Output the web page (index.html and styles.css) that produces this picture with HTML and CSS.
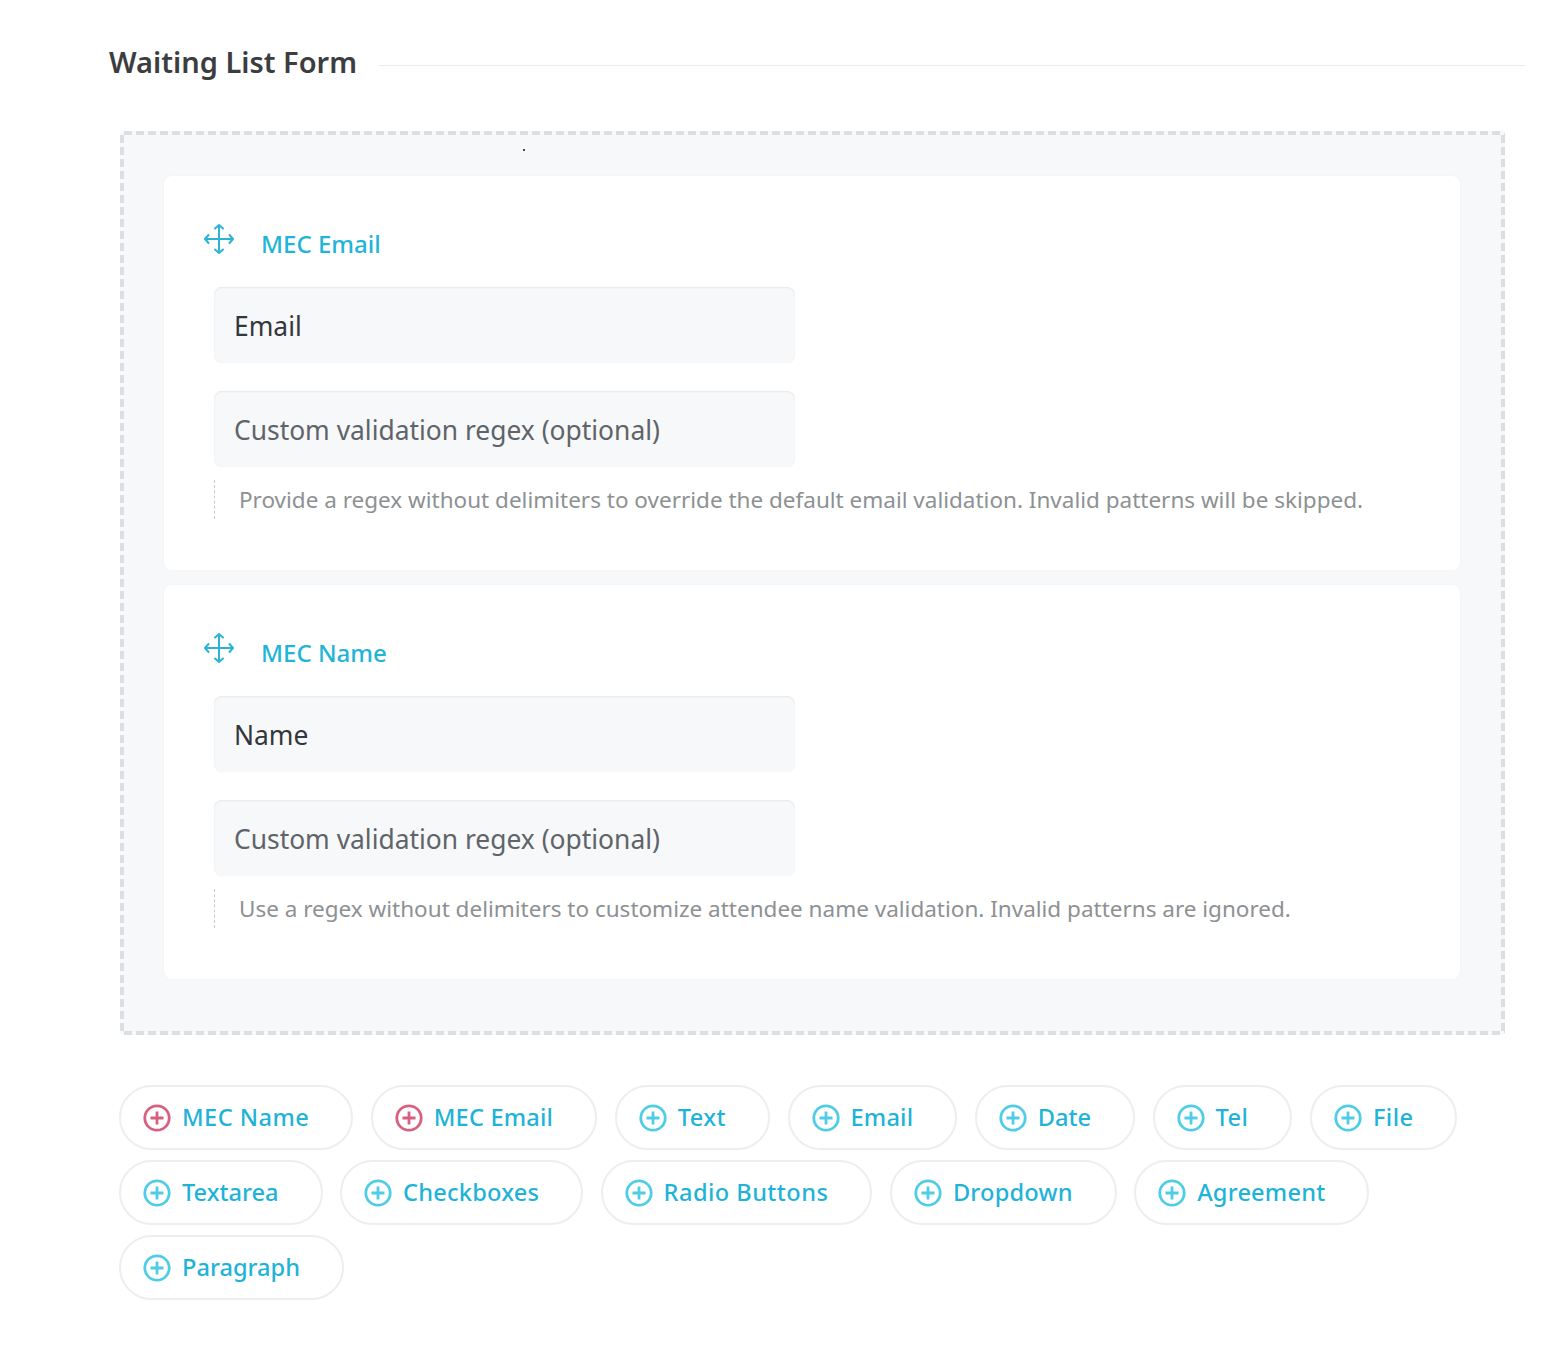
FILE: index.html
```html
<!DOCTYPE html>
<html lang="en">
<head>
<meta charset="utf-8">
<title>Waiting List Form</title>
<link rel="stylesheet" href="styles.css">
</head>
<body>
<svg class="sprite" width="0" height="0" aria-hidden="true">
  <symbol id="plus" viewBox="0 0 28 28"><circle cx="14" cy="14" r="12.2" fill="none" stroke="currentColor" stroke-width="2.8"/><path d="M14 7.500v13M7.500 14h13" fill="none" stroke="currentColor" stroke-width="2.800"/></symbol>
  <symbol id="move" viewBox="0 0 32 32"><path d="M16 2v28M2 16h28M12 5.500 16 2l4 3.500M12 26.500l4 3.500 4-3.500M5.500 12 2 16l3.500 4M26.500 12l3.500 4-3.500 4" fill="none" stroke="currentColor" stroke-width="2" stroke-linecap="round" stroke-linejoin="round"/></symbol>
</svg>
<main class="page">
  <header class="heading">
    <h2 class="heading-title">Waiting List Form</h2>
    <span class="heading-rule"></span>
  </header>
  <section class="dropzone">
    <span class="speck"></span>
    <article class="card">
      <div class="card-head">
        <svg class="move-icon"><use href="#move"/></svg>
        <span class="card-label">MEC Email</span>
      </div>
      <div class="field field-value">Email</div>
      <div class="field field-placeholder">Custom validation regex (optional)</div>
      <p class="note">Provide a regex without delimiters to override the default email validation. Invalid patterns will be skipped.</p>
    </article>
    <article class="card">
      <div class="card-head">
        <svg class="move-icon"><use href="#move"/></svg>
        <span class="card-label">MEC Name</span>
      </div>
      <div class="field field-value">Name</div>
      <div class="field field-placeholder">Custom validation regex (optional)</div>
      <p class="note">Use a regex without delimiters to customize attendee name validation. Invalid patterns are ignored.</p>
    </article>
  </section>
  <div class="pills">
    <button class="pill pill-used"><svg class="pill-icon"><use href="#plus"/></svg>MEC Name</button>
    <button class="pill pill-used pill-snug"><svg class="pill-icon"><use href="#plus"/></svg>MEC Email</button>
    <button class="pill"><svg class="pill-icon"><use href="#plus"/></svg>Text</button>
    <button class="pill pill-snug"><svg class="pill-icon"><use href="#plus"/></svg>Email</button>
    <button class="pill pill-tight"><svg class="pill-icon"><use href="#plus"/></svg>Date</button>
    <button class="pill"><svg class="pill-icon"><use href="#plus"/></svg>Tel</button>
    <button class="pill"><svg class="pill-icon"><use href="#plus"/></svg>File</button>
    <button class="pill pill-tight"><svg class="pill-icon"><use href="#plus"/></svg>Textarea</button>
    <button class="pill pill-snug"><svg class="pill-icon"><use href="#plus"/></svg>Checkboxes</button>
    <button class="pill"><svg class="pill-icon"><use href="#plus"/></svg>Radio Buttons</button>
    <button class="pill pill-snug"><svg class="pill-icon"><use href="#plus"/></svg>Dropdown</button>
    <button class="pill pill-snug"><svg class="pill-icon"><use href="#plus"/></svg>Agreement</button>
    <button class="pill pill-tight"><svg class="pill-icon"><use href="#plus"/></svg>Paragraph</button>
  </div>
</main>
</body>
</html>
```
FILE: styles.css
```css
* { box-sizing: border-box; }
html, body { margin: 0; background: #fff; }
body { font-family: "Noto Sans", "Open Sans", sans-serif; color: #3a3c3e; }
.sprite { display: block; height: 0; }
.page { width: 1558px; height: 1368px; padding: 40px 32px 0 109px; }
.heading { display: flex; align-items: center; gap: 21px; height: 48px; margin-bottom: 43px; }
.heading-title { margin: -4px 0 0; font-size: 29px; line-height: 46px; font-weight: 600; color: #3c3d3f; white-space: nowrap; }
.heading-rule { flex: 1; height: 1px; margin-top: 2px; background: #ececec; }
.dropzone {
  position: relative;
  width: 1385px;
  height: 904px;
  margin-left: 11px;
  padding: 45px 44px 0;
  border-radius: 4px;
  display: flex;
  flex-direction: column;
  gap: 15px;
  background-color: #f7f8f9;
  background-image:
    linear-gradient(to right, #dcdfe2 8px, transparent 8px),
    linear-gradient(to right, #dcdfe2 8px, transparent 8px),
    linear-gradient(to bottom, #dcdfe2 8px, transparent 8px),
    linear-gradient(to bottom, #dcdfe2 8px, transparent 8px);
  background-size: 12px 4px, 12px 4px, 4px 12px, 4px 12px;
  background-position: 4px 0, 4px 100%, 0 4px, 100% 4px;
  background-repeat: repeat-x, repeat-x, repeat-y, repeat-y;
}
.speck { position: absolute; left: 403px; top: 18px; width: 2px; height: 2px; background: #111; border-radius: 50%; }
.card { width: 1296px; height: 394px; padding: 47px 0 0 50px; background: #fff; border-radius: 8px; box-shadow: 0 0 3px rgba(0,0,0,.03); }
.card-head { position: relative; height: 36px; padding-left: 47px; margin-bottom: 28px; display: flex; align-items: center; }
.move-icon { position: absolute; left: -11px; top: 0; width: 32px; height: 32px; color: #2bb3d6; }
.card-label { position: relative; top: 3px; font-size: 24px; line-height: 36px; font-weight: 500; color: #1fb5d8; }
.field { width: 581px; height: 76px; padding-left: 20px; margin-bottom: 28px; background: #f7f8f9; border-radius: 8px; box-shadow: inset 0 1px 2px rgba(0,0,0,.07), 0 0 1px rgba(0,0,0,.06); font-size: 26.4px; line-height: 78px; white-space: nowrap; }
.field-value { color: #33373b; }
.field-placeholder { color: #5e6469; }
.note { margin: -15px 0 0; height: 39px; padding-left: 24px; border-left: 1px dashed #c9c9c9; font-size: 22.500px; line-height: 39px; color: #8d9193; white-space: nowrap; }
.pills { display: flex; flex-wrap: wrap; gap: 10px 17.5px; width: 1386px; margin: 50px 0 0 10px; }
.pill { display: flex; align-items: center; height: 65px; padding: 0 42px 0 22px; background: #fff; border: 2px solid #eceeef; border-radius: 33px; font-family: inherit; font-size: 23.6px; line-height: 61px; font-weight: 500; letter-spacing: .45px; color: #1fb3d8; white-space: nowrap; }
.pill-snug { letter-spacing: .2px; }
.pill-tight { letter-spacing: 0; }
.pill-icon { width: 28px; height: 28px; margin-right: 11px; color: #4fcde6; flex: none; }
.pill-used .pill-icon { color: #d7607f; }
```
